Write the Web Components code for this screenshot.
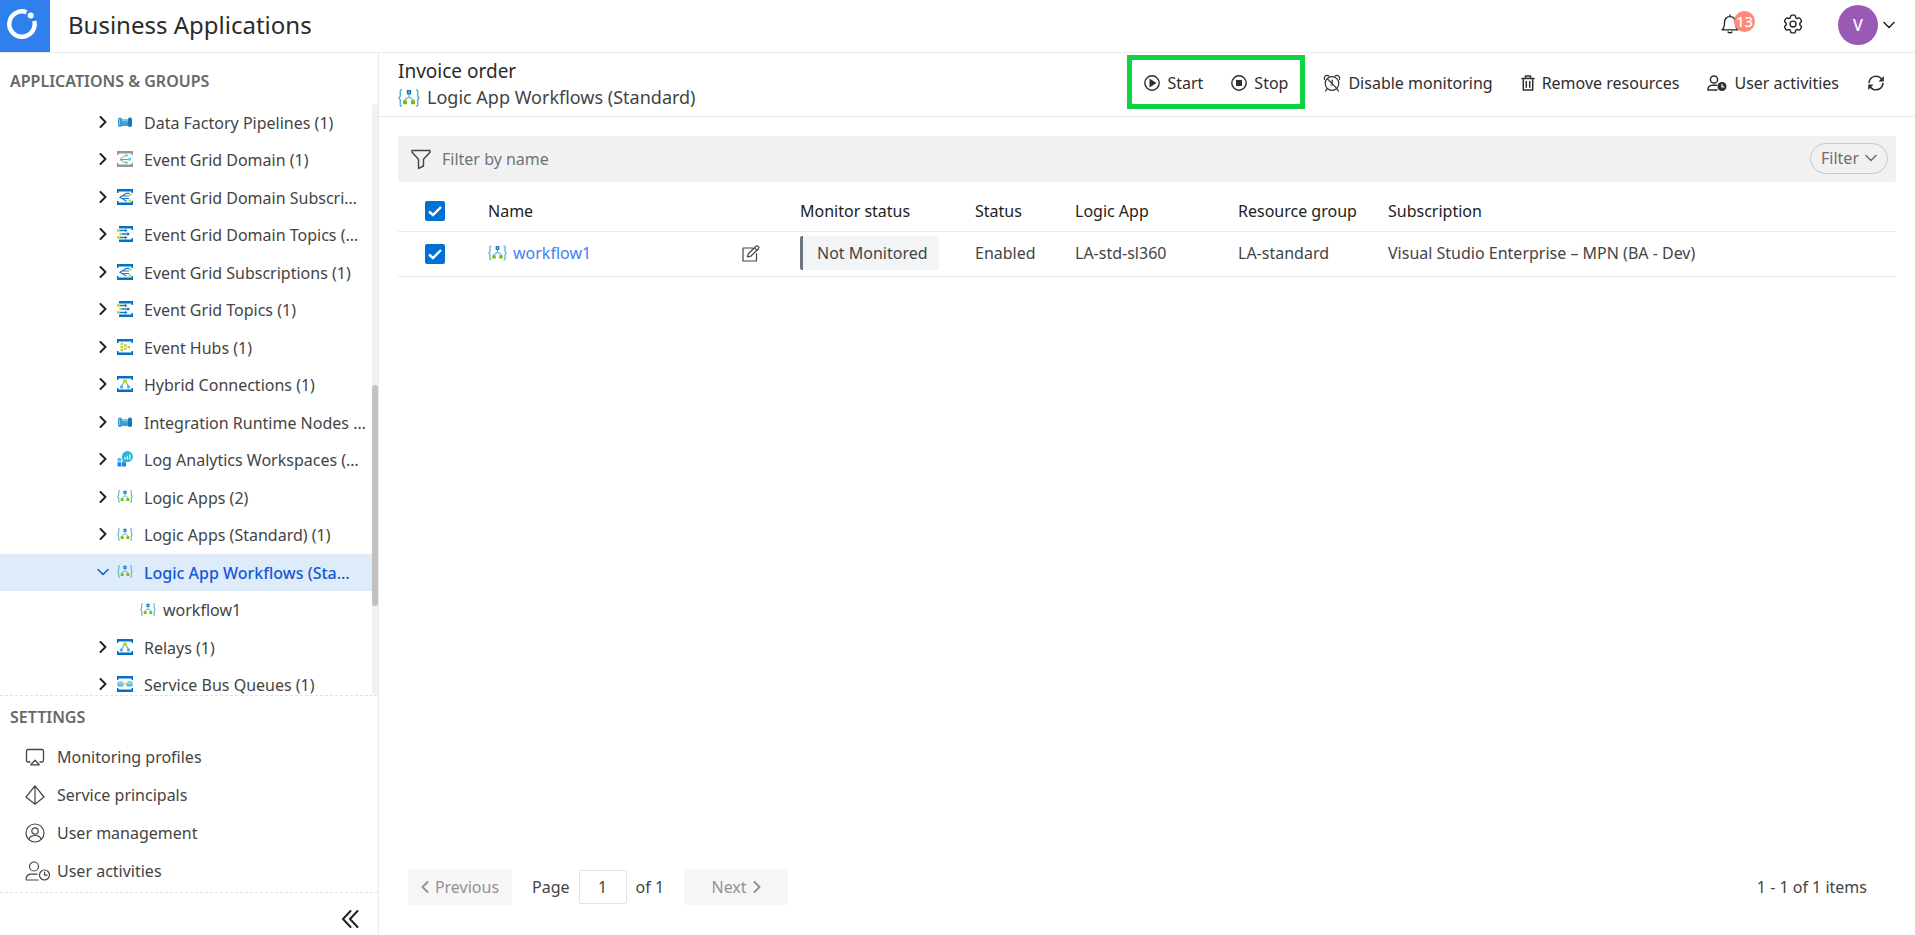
<!DOCTYPE html>
<html lang="en">
<head>
<meta charset="utf-8">
<title>Business Applications</title>
<style>
html, body { height: 100%; margin: 0; }
body { font: 16px/24px "Noto Sans", "Open Sans", sans-serif; color: #444; background: #fff; }
</style>
</head>
<body>
<business-app></business-app>
<script>
const line = (body, w = 1.3) => `<g fill="none" stroke="currentColor" stroke-width="${w}" stroke-linecap="round" stroke-linejoin="round">${body}</g>`;
const frame = (c = "#0072c6") => `<path fill="${c}" d="M0 0h16v4h-1.5V2.4h-13V4H0zM0 16h16v-4h-1.5v1.6h-13V12H0z"/>`;
const nodes = frame() + `<path d="M8 5 3.8 11M8 5l4.200 6" stroke="#59b4d9" stroke-width="1.300" fill="none"/><rect x="6.200" y="3.500" width="3.600" height="3.400" fill="#b8d432"/><circle cx="4.500" cy="11" r="1.700" fill="#59b4d9"/><circle cx="11.500" cy="11" r="1.700" fill="#59b4d9"/>`;

/* name: [width, height, markup]; the size is also the view box */
const ICONS = {
  logo: [50, 52, `<rect width="50" height="52" fill="#2f80ed"/><path d="M26.500 12.200A12.700 12.700 0 1 0 34.300 21" fill="none" stroke="#fff" stroke-width="4.400"/><circle cx="30.700" cy="15.500" r="3" fill="#fff"/>`],
  bell: [18, 20, line(`<path d="M9 1v1.500M1.200 15.800h15.600c-1.700-1.500-2.300-3.300-2.300-7C14.500 5 12.400 2.600 9 2.600S3.500 5 3.500 8.800c0 3.700-.6 5.500-2.300 7z"/><path d="M7 18c.8 1 3.200 1 4 0"/>`)],
  gear: [20, 20, `<g transform="translate(-1.800 -1.800) scale(.985)">${line(`<path d="M9.594 3.940c.09-.542.56-.94 1.110-.94h2.593c.55 0 1.020.398 1.110.94l.213 1.281c.063.374.313.686.645.87.074.04.147.083.22.127.325.196.72.257 1.075.124l1.217-.456a1.125 1.125 0 0 1 1.370.49l1.296 2.247a1.125 1.125 0 0 1-.26 1.431l-1.003.827c-.293.241-.438.613-.43.992a7.723 7.723 0 0 1 0 .255c-.008.378.137.75.43.991l1.004.827c.424.35.534.955.26 1.430l-1.298 2.247a1.125 1.125 0 0 1-1.369.491l-1.217-.456c-.355-.133-.75-.072-1.076.124a6.470 6.470 0 0 1-.22.128c-.331.183-.581.495-.644.869l-.213 1.281c-.09.543-.56.94-1.110.94h-2.594c-.55 0-1.019-.398-1.110-.94l-.213-1.281c-.062-.374-.312-.686-.644-.87a6.520 6.520 0 0 1-.22-.127c-.325-.196-.72-.257-1.076-.124l-1.217.456a1.125 1.125 0 0 1-1.369-.49l-1.297-2.247a1.125 1.125 0 0 1 .26-1.431l1.004-.827c.292-.24.437-.613.43-.991a6.932 6.932 0 0 1 0-.255c.007-.38-.138-.751-.43-.992l-1.004-.827a1.125 1.125 0 0 1-.26-1.430l1.297-2.247a1.125 1.125 0 0 1 1.370-.491l1.216.456c.356.133.751.072 1.076-.124.072-.044.146-.086.22-.128.332-.183.582-.495.644-.869l.214-1.280Z"/><circle cx="12" cy="12" r="3"/>`, 1.400)}</g>`],
  down: [12, 8, line(`<path d="M1 1.500 6 6.500l5-5"/>`, 1.500)],
  right: [8, 12, line(`<path d="M1.500 1 6.500 6l-5 5"/>`, 1.900)],
  left: [8, 12, line(`<path d="M6.500 1 1.500 6l5 5"/>`, 1.900)],
  collapse: [18, 18, line(`<path d="M9.500 1 2 9l7.500 8M16.500 1 9 9l7.500 8"/>`, 2)],
  pipeline: [16, 16, `<path d="M3 5h10v7H3z" fill="#3fa0d0"/><path d="M3 5h10v2.300H3z" fill="#7cc8ea"/><rect x="1" y="3.500" width="4" height="9.500" rx="1.800" fill="#3a9ccc"/><rect x="11" y="3.500" width="4" height="9.500" rx="1.800" fill="#1579b5"/><path d="M2 5h1v6H2z" fill="#7cc8ea"/>`],
  domain: [16, 16, frame("#969696") + `<path d="M3 8.500 8 4.500M3 8.500h9M3 8.500l5 3.200" stroke="#969696" fill="none"/><path d="M8 3.500h3v2H8zM11 7h3v2.500h-3zM8 10.500h3v2H8z" fill="#50d9f0"/>`],
  subscr: [16, 16, frame() + `<path d="M12.500 4.300H9.500L3 8.200 9.500 12.200M12 7H6M12 9.500H6.500" stroke="#1b78c2" stroke-width="1.200" fill="none"/><path d="M12 4.500h2.500v2H12zM11.500 10.500H14v2h-2.500z" fill="#b8d432"/>`],
  topics: [16, 16, `<path fill="#0072c6" d="M2 0h14v4h-1.500V2.400H2zM2 16h14v-4h-1.500v1.600H2z"/><path d="M2.500 4.500H9M5 8h7M2.500 11.500H9" stroke="#1b78c2" stroke-width="1.300"/><path d="M8 2.800 10.500 4.500 8 6.200zM10.500 6 13 8l-2.500 2zM8 9.800l2.500 1.700L8 13.200z" fill="#1b78c2"/><path d="M0 3.300h2.500v2.500H0zM2.500 6.800H5v2.400H2.500zM0 10.200h2.500v2.500H0z" fill="#b8d432"/>`],
  hubs: [16, 16, frame() + `<g fill="#b8d432"><path d="M3.500 3.800h2.600v2.300H3.500zM3.500 6.900h2.600v2.300H3.500zM3.500 10h2.600v2.300H3.500zM7 5.300h2.600v2.300H7zM7 8.500h2.600v2.300H7zM10.500 6.900h2.600v2.300h-2.600z"/></g>`],
  nodes: [16, 16, nodes],
  queues: [16, 16, frame() + `<path d="M7 8h2.500" stroke="#b8d432" stroke-width="1.300"/><path d="M.5 5.500h5.800v5H.5zM9.700 5.500h5.800v5H9.700z" fill="#59b4d9"/><path d="M.8 6l2.600 2L6 6M10 6l2.600 2 2.600-2" stroke="#fff" stroke-width=".8" fill="none"/>`],
  analytics: [16, 16, `<path d="M.5 7h3.800v3.500H.5z" fill="#50c0f0"/><path d="M.5 11.300h3.800v4.200H.5zM5 11.300h4v4.200H5z" fill="#1f80e0"/><circle cx="10.400" cy="5.600" r="5.500" fill="#2bb4d8"/><path d="M5.500 7v5l4-2z" fill="#2bb4d8"/><path d="M8 6v2.500M10.400 4.800v3.700M12.800 3.500v5" stroke="#fff" stroke-width="1.200"/>`],
  logic: [22, 18, `<g fill="none" stroke="#59b4d9" stroke-width="1.500"><path d="M4 1H3.200Q2.300 1 2.300 2.200V7L1 9l1.300 2v4.800q0 1.200.9 1.200H4M18 1h.8q.9 0 .9 1.200V7L21 9l-1.300 2v4.800q0 1.200-.9 1.200H18"/><path d="M11 5v3L7 10.500V13M11 8l4 2.500V13" stroke-width="1.300"/></g><rect x="9.600" y="1.800" width="2.800" height="2.800" fill="#fff" stroke="#0f6fc0" stroke-width="1.500"/><path d="M5 11.500h4v3.800H5zM13 11.500h4v3.800h-4z" fill="#7fba00"/>`],
  monitor: [20, 20, line(`<path d="M5 15H3.200Q1.500 15 1.500 13.300V4.200Q1.500 2.500 3.200 2.500h13.600q1.700 0 1.700 1.700v9.100q0 1.700-1.700 1.700H15M10 13.200 14.200 17.800H5.800z"/>`)],
  prism: [20, 20, line(`<path d="M10 .8 19 12l-9 7.200L1 12zM10 .8v18.400"/>`, 1.200)],
  account: [20, 20, line(`<circle cx="10" cy="10" r="9"/><circle cx="10" cy="8" r="3.200"/><path d="M4 16.500c.6-3.200 2.600-4 6-4s5.400.8 6 4"/>`, 1.200)],
  userclock: [26, 20, line(`<circle cx="9" cy="5.500" r="4.500"/><path d="M13 19H1.500c-.8 0-.8-5.500 4-5.800h6.500"/><circle cx="19.500" cy="14" r="5"/><path d="M19.500 11v3.200H22"/>`, 1.200)],
  play: [16, 16, line(`<circle cx="8" cy="8" r="7.200"/>`, 1.400) + `<path fill="currentColor" d="M5.500 3.500 12.500 8l-7 4.500z"/>`],
  stop: [16, 16, line(`<circle cx="8" cy="8" r="7.200"/>`, 1.400) + `<path fill="currentColor" d="M5 5h6v6H5z"/>`],
  alarm: [18, 18, line(`<circle cx="9" cy="9.500" r="6.800"/><path d="M1.500 5.500C.5 2.500 3.500.5 6 2M16.500 5.500C17.500 2.500 14.500.5 12 2M4.200 14.800 2.500 17M13.800 14.800l1.700 2.200M4.500 4.800l9 9.400M9.200 6v2.500M8 11h1"/>`, 1.200)],
  trash: [14, 16, line(`<path d="M1 3.500h12M4.500 3.300V1h5v2.300M2.300 3.700V15h9.400V3.700M5.300 6.500v5.800M8.700 6.500v5.800"/>`, 1.500)],
  userdot: [20, 16, line(`<circle cx="7" cy="4.500" r="3.600"/><path d="M10 15H1c-.3-3 1.500-4.800 4.500-4.800h4"/>`, 1.500) + `<circle cx="15" cy="11.500" r="4.500" fill="currentColor"/><path d="M15 9v2.800h2.300" stroke="#fff" fill="none" stroke-width="1.200"/>`],
  refresh: [18, 16, line(`<path d="M2 7.500C2.600 3.800 5.500 1.200 9 1.200c2.700 0 4.700 1.300 6 3.500M16 8.500c-.6 3.700-3.500 6.300-7 6.300-2.700 0-4.700-1.300-6-3.500"/>`, 1.600) + `<path fill="currentColor" d="M16.800 1v5.500h-5.300zM1.200 15V9.500h5.300z"/>`],
  funnel: [20, 20, line(`<path d="M1 1.500h18v1.800l-6.500 7V17l-5 2.500v-9.200L1 3.300z"/>`, 1.400)],
  edit: [18, 17, line(`<path d="M10.500 3H1v13h13.500V8.500M5.500 12l.8-3.200L14 1.200q1-.8 2.200.2t.3 2.300L8.800 11.200zM12.500 2.800l2.400 2.400"/>`, 1.200)]
};

class BaseElement extends HTMLElement {
  connectedCallback() {
    if (!this.shadowRoot) this.attachShadow({ mode: "open" }).innerHTML = `<style>
      *, *::before, *::after { box-sizing: border-box; }
      button { font: inherit; color: inherit; background: none; border: 0; padding: 0; margin: 0; cursor: pointer; }
      button:disabled { cursor: default; }
      a { color: inherit; text-decoration: none; }
      ${this.css()}</style>${this.html()}`;
  }
}

customElements.define("app-icon", class extends BaseElement {
  css() { return `:host { display: inline-flex; flex: none; } svg { display: block; }`; }
  html() {
    const [w, h, body] = ICONS[this.getAttribute("name")];
    const width = Number(this.getAttribute("width") || w);
    const height = Math.round(h * width / w);
    return `<svg width="${width}" height="${height}" viewBox="0 0 ${w} ${h}" aria-hidden="true">${body}</svg>`;
  }
});

customElements.define("app-header", class extends BaseElement {
  css() { return `
    :host { display: flex; align-items: center; height: 53px; flex: none; border-bottom: 1px solid #ebebeb; padding-right: 20px; }
    h1 { margin: 0 auto 2px 18px; font-size: 24px; line-height: 32px; font-weight: 400; color: #2b2b2b; }
    button { display: flex; align-items: center; color: #222; }
    .bell { position: relative; margin: -4px 44px 0 0; }
    .bell span { position: absolute; left: 13px; top: -3px; width: 21px; height: 21px; border-radius: 50%; background: #ff8a7a; color: #fff; font-size: 15px; line-height: 20px; font-weight: 500; text-align: center; }
    .gear { margin: -4px 35px 0 0; }
    .user { gap: 5px; margin-top: -2px; }
    .avatar { width: 40px; height: 40px; border-radius: 50%; background: #9b59b6; color: #fff; line-height: 40px; font-weight: 500; }`; }
  html() { return `
    <app-icon name="logo"></app-icon><h1>Business Applications</h1>
    <button class="bell" aria-label="Notifications"><app-icon name="bell"></app-icon><span>13</span></button>
    <button class="gear" aria-label="Settings"><app-icon name="gear"></app-icon></button>
    <button class="user" aria-label="Account"><div class="avatar">V</div><app-icon name="down"></app-icon></button>`; }
});

customElements.define("tree-item", class extends BaseElement {
  css() { return `
    :host { display: block; height: 37px; }
    :host(:nth-child(even)) { height: 38px; }
    button { display: flex; align-items: center; width: 100%; height: 100%; padding-left: 97px; white-space: nowrap; text-align: left; }
    .arrow { width: 12px; margin-right: 8px; display: flex; justify-content: center; color: #222; }
    .label { margin-left: 11px; }
    app-icon { margin-bottom: 2px; }
    :host([leaf]) button { padding-left: 140px; }
    :host([leaf]) .label { margin-left: 7px; }
    :host([selected]) { background: #deebf9; color: #1558d6; font-weight: 500; }
    :host([selected]) .arrow { color: #1558d6; }`; }
  html() {
    const open = this.hasAttribute("selected");
    const arrow = this.hasAttribute("leaf") ? "" : `<span class="arrow"><app-icon name="${open ? "down" : "right"}"></app-icon></span>`;
    return `<button>${arrow}<app-icon name="${this.getAttribute("icon")}" width="16"></app-icon><span class="label"><slot></slot></span></button>`;
  }
});

customElements.define("settings-link", class extends BaseElement {
  css() { return `
    :host { display: block; }
    a { display: flex; align-items: center; height: 38px; padding-left: 25px; }
    app-icon { width: 26px; margin-right: 6px; }`; }
  html() { return `<a href="#"><app-icon name="${this.getAttribute("icon")}"></app-icon><slot></slot></a>`; }
});

customElements.define("side-nav", class extends BaseElement {
  css() { return `
    :host { display: flex; flex-direction: column; width: 379px; flex: none; border-right: 1px solid #ebebeb; min-height: 0; }
    h2 { margin: 0; padding: 0 10px; font-size: 16px; font-weight: 600; color: #686868; }
    .groups { line-height: 56px; height: 51px; }
    .tree { display: flex; flex: 1; min-height: 0; }
    .items { flex: 1; min-width: 0; overflow: hidden; }
    .track { display: flex; flex-direction: column; width: 6px; background: #f1f1f1; border-radius: 3px; }
    .track::before { content: ""; flex: 281; }
    .track::after { content: ""; flex: 89; }
    .thumb { flex: 221; background: #c1c1c1; border-radius: 3px; }
    .settings { border-top: 1px dashed #e2e2e2; padding-bottom: 2px; }
    .settings h2 { line-height: 42px; }
    footer { display: flex; justify-content: flex-end; border-top: 1px dashed #e2e2e2; height: 43px; padding: 17px 19px 0 0; }
    footer button { height: 18px; color: #222; }`; }
  html() {
    const rows = [["pipeline", "Data Factory Pipelines (1)"], ["domain", "Event Grid Domain (1)"], ["subscr", "Event Grid Domain Subscri…"],
      ["topics", "Event Grid Domain Topics (…"], ["subscr", "Event Grid Subscriptions (1)"], ["topics", "Event Grid Topics (1)"],
      ["hubs", "Event Hubs (1)"], ["nodes", "Hybrid Connections (1)"], ["pipeline", "Integration Runtime Nodes …"],
      ["analytics", "Log Analytics Workspaces (…"], ["logic", "Logic Apps (2)"], ["logic", "Logic Apps (Standard) (1)"],
      ["logic", "Logic App Workflows (Sta…", "selected"], ["logic", "workflow1", "leaf"], ["nodes", "Relays (1)"], ["queues", "Service Bus Queues (1)"]];
    return `<h2 class="groups">APPLICATIONS &amp; GROUPS</h2>
    <div class="tree"><div class="items">${rows.map(([i, t, a = ""]) => `<tree-item icon="${i}" ${a}>${t}</tree-item>`).join("")}</div>
      <div class="track"><div class="thumb"></div></div></div>
    <section class="settings"><h2>SETTINGS</h2>
      <settings-link icon="monitor">Monitoring profiles</settings-link>
      <settings-link icon="prism">Service principals</settings-link>
      <settings-link icon="account">User management</settings-link>
      <settings-link icon="userclock">User activities</settings-link></section>
    <footer><button aria-label="Collapse menu"><app-icon name="collapse"></app-icon></button></footer>`;
  }
});

customElements.define("tool-button", class extends BaseElement {
  css() { return `
    :host { display: block; color: #2e2e2e; }
    button { display: flex; align-items: center; gap: 7px; white-space: nowrap; }`; }
  html() { return `<button aria-label="${this.getAttribute("label") || this.textContent}"><app-icon name="${this.getAttribute("icon")}"></app-icon><slot></slot></button>`; }
});

customElements.define("page-head", class extends BaseElement {
  css() { return `
    :host { display: flex; align-items: flex-start; justify-content: space-between; height: 64px; padding: 2px 30px 0 19px; border-bottom: 1px solid #ebebeb; }
    h2 { margin: 3px 0 0; font-size: 19px; line-height: 26px; font-weight: 400; color: #2b2b2b; }
    p { display: flex; align-items: center; gap: 7px; margin: 0; font-size: 18px; line-height: 27px; }
    .tools, .marked { display: flex; align-items: center; gap: 28px; }
    .marked { height: 54px; padding: 2px 12px 0; border: 5px solid #10d344; margin-right: -10px; }
    tool-button { margin-top: 2px; }
    .marked tool-button { margin-top: 0; }`; }
  html() { return `
    <div><h2>Invoice order</h2><p><app-icon name="logic"></app-icon>Logic App Workflows (Standard)</p></div>
    <div class="tools">
      <div class="marked"><tool-button icon="play">Start</tool-button><tool-button icon="stop">Stop</tool-button></div>
      <tool-button icon="alarm">Disable monitoring</tool-button>
      <tool-button icon="trash">Remove resources</tool-button>
      <tool-button icon="userdot">User activities</tool-button>
      <tool-button icon="refresh" label="Refresh"></tool-button>
    </div>`; }
});

customElements.define("filter-bar", class extends BaseElement {
  css() { return `
    :host { display: flex; align-items: center; height: 46px; padding: 0 8px 0 13px; background: #f1f1f1; border-radius: 3px; }
    input { flex: 1; min-width: 0; margin-left: 11px; padding: 0; border: 0; outline: 0; background: none; font: inherit; }
    input::placeholder { color: #6c757d; opacity: 1; }
    .icon { color: #444; }
    button { display: flex; align-items: center; gap: 6px; height: 31px; padding: 0 10px; margin-bottom: 2px; border: 1px solid #c8c8c8; border-radius: 16px; color: #6e6e6e; }`; }
  html() { return `<app-icon class="icon" name="funnel"></app-icon><input type="text" aria-label="Filter by name" placeholder="Filter by name"><button>Filter<app-icon name="down"></app-icon></button>`; }
});

customElements.define("resource-table", class extends BaseElement {
  css() { return `
    :host { display: block; }
    table { width: 100%; border-collapse: collapse; table-layout: fixed; }
    th, td { padding: 0; text-align: left; white-space: nowrap; border-bottom: 1px solid #ebebeb; }
    th { height: 49px; padding-top: 9px; font-weight: 400; color: #222; }
    td { height: 45px; padding-bottom: 2px; }
    .pick { width: 90px; padding-left: 27px; }
    td.pick { padding-bottom: 0; }
    .name { width: 312px; } .monitor { width: 175px; } .status { width: 100px; } .app { width: 163px; } .group { width: 150px; }
    input { appearance: none; display: block; width: 20px; height: 20px; margin: 0; border-radius: 2px; background: #0070d2 url('data:image/svg+xml,<svg xmlns="http://www.w3.org/2000/svg" viewBox="0 0 20 20"><path d="M4 10.500 8 14 16 6" fill="none" stroke="white" stroke-width="2.400"/></svg>'); }
    .cell { display: flex; align-items: center; gap: 6px; padding-right: 40px; }
    .cell button { margin-left: auto; height: 17px; }
    .cell a { color: #3f80f2; }
    .pill { display: block; width: 139px; height: 34px; line-height: 34px; padding-left: 14px; border-left: 3px solid #6c757d; border-radius: 2px; background: #f3f4f6; }`; }
  html() { return `<table>
    <thead><tr><th class="pick"><input type="checkbox" checked aria-label="Select all"></th><th class="name">Name</th><th class="monitor">Monitor status</th><th class="status">Status</th><th class="app">Logic App</th><th class="group">Resource group</th><th>Subscription</th></tr></thead>
    <tbody><tr><td class="pick"><input type="checkbox" checked aria-label="Select workflow1"></td>
      <td><div class="cell"><app-icon name="logic" width="19"></app-icon><a href="#">workflow1</a><button aria-label="Edit"><app-icon name="edit"></app-icon></button></div></td>
      <td><span class="pill">Not Monitored</span></td><td>Enabled</td><td>LA-std-sl360</td><td>LA-standard</td><td>Visual Studio Enterprise – MPN (BA - Dev)</td></tr></tbody></table>`; }
});

customElements.define("table-pager", class extends BaseElement {
  css() { return `
    :host { display: flex; align-items: center; padding: 0 29px 0 10px; }
    button { display: flex; align-items: center; justify-content: center; gap: 6px; width: 104px; height: 36px; background: #f6f6f6; border-radius: 4px; color: #929292; }
    label { display: flex; align-items: center; gap: 9px; margin: 0 20px; }
    input { width: 48px; height: 34px; padding: 0; border: 1px solid #e2e2e2; border-radius: 2px; font: inherit; color: inherit; text-align: center; }
    output { margin-left: auto; }`; }
  html() { return `<button disabled><app-icon name="left"></app-icon>Previous</button>
    <label>Page <input type="text" value="1"> of 1</label>
    <button disabled>Next<app-icon name="right"></app-icon></button><output>1 - 1 of 1 items</output>`; }
});

customElements.define("business-app", class extends BaseElement {
  css() { return `
    :host { display: flex; flex-direction: column; height: 100%; }
    .body { display: flex; flex: 1; min-height: 0; }
    main { flex: 1; min-width: 0; display: flex; flex-direction: column; }
    .content { flex: 1; display: flex; flex-direction: column; padding: 19px 19px 30px; }
    table-pager { margin-top: auto; }`; }
  html() { return `<app-header></app-header>
    <div class="body"><side-nav></side-nav>
      <main><page-head></page-head>
        <div class="content"><filter-bar></filter-bar><resource-table></resource-table><table-pager></table-pager></div></main></div>`; }
});
</script>
</body>
</html>
